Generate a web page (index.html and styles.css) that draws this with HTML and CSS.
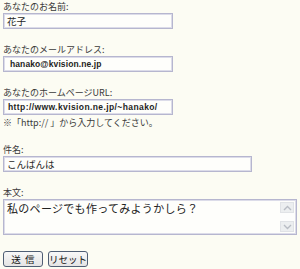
FILE: index.html
```html
<!DOCTYPE html>
<html lang="ja">
<head>
<meta charset="utf-8">
<link rel="stylesheet" href="styles.css">
</head>
<body>
<form class="form">
  <div class="group">
    <div class="label">あなたのお名前:</div>
    <div class="box w170"><span class="val">花子</span></div>
  </div>
  <div class="group">
    <div class="label">あなたのメールアドレス:</div>
    <div class="box w170"><span class="val latin">hanako@kvision.ne.jp</span></div>
  </div>
  <div class="group">
    <div class="label">あなたのホームページURL:</div>
    <div class="box w170"><span class="val latin url">http://www.kvision.ne.jp/~hanako/</span></div>
    <div class="note">※「http:// 」から入力してください。</div>
  </div>
  <div class="group">
    <div class="label">件名:</div>
    <div class="box w249"><span class="val">こんばんは</span></div>
  </div>
  <div class="group">
    <div class="label">本文:</div>
    <div class="area">
      <div class="area-text">私のページでも作ってみようかしら？</div>
      <div class="sbar">
        <div class="sbtn"><svg width="11" height="8" viewBox="0 0 11 8"><path d="M2 6 L5.5 2.5 L9 6" fill="none" stroke="#b8bcc4" stroke-width="1.4"/></svg></div>
        <div class="strack"></div>
        <div class="sbtn"><svg width="11" height="8" viewBox="0 0 11 8"><path d="M2 2 L5.5 5.5 L9 2" fill="none" stroke="#b8bcc4" stroke-width="1.4"/></svg></div>
      </div>
    </div>
  </div>
  <div class="buttons">
    <div class="btn">送&nbsp;&nbsp;信</div>
    <div class="btn">リセット</div>
  </div>
</form>
</body>
</html>
```
FILE: styles.css
```css
html, body {
  margin: 0;
  padding: 0;
  background: #fcfcf3;
}
body {
  font-family: "Noto Sans CJK JP", "Liberation Sans", sans-serif;
  font-size: 9px;
  color: #333;
}
.form {
  padding: 0 3px;
  display: flex;
  flex-direction: column;
}
.group {
  display: flex;
  flex-direction: column;
  align-items: flex-start;
  margin-bottom: 14px;
}
.label {
  height: 13px;
  line-height: 13px;
  color: #3a3a3a;
}
.box {
  box-sizing: border-box;
  height: 16px;
  border: 1px solid #b6b6cf;
  box-shadow: inset 0 0 0 1px #dcdce9;
  background: #fefefb;
  display: flex;
  align-items: center;
  padding: 0 3px;
  color: #1e1e1e;
  font-size: 9.5px;
  overflow: hidden;
  white-space: nowrap;
}
.w170 { width: 170px; }
.w249 { width: 249px; }
.latin {
  font-family: "Liberation Sans", Arial, sans-serif;
  font-weight: bold;
  font-size: 8.5px;
  padding-left: 3px;
  letter-spacing: 0.1px;
}
.url {
  padding-left: 1px;
  letter-spacing: 0.4px;
}
.note {
  height: 13px;
  line-height: 13px;
  margin-top: 1px;
  color: #3a3a3a;
}
.area {
  box-sizing: border-box;
  width: 294px;
  height: 36px;
  border: 1px solid #b6b6cf;
  box-shadow: inset 0 0 0 1px #dcdce9;
  background: #fefefb;
  display: flex;
  padding: 2px;
}
.area-text {
  flex: 1;
  font-size: 11px;
  letter-spacing: 0.3px;
  color: #222;
  line-height: 13px;
  padding-left: 1px;
}
.sbar {
  width: 14px;
  display: flex;
  flex-direction: column;
  background: #fafafa;
}
.sbtn {
  height: 11px;
  background: #eceef0;
  border: 1px solid #e0e2e6;
  box-sizing: border-box;
  display: flex;
  align-items: center;
  justify-content: center;
}
.strack {
  flex: 1;
  background: #fdfdfd;
}
.buttons {
  display: flex;
  gap: 5px;
  margin-top: 2px;
}
.btn {
  box-sizing: border-box;
  width: 40px;
  height: 16px;
  border: 1px solid #4f5e74;
  border-radius: 3px;
  background: linear-gradient(#f8f8f8, #e4e4e4);
  display: flex;
  align-items: center;
  justify-content: center;
  font-size: 9.5px;
  color: #111;
}
```
